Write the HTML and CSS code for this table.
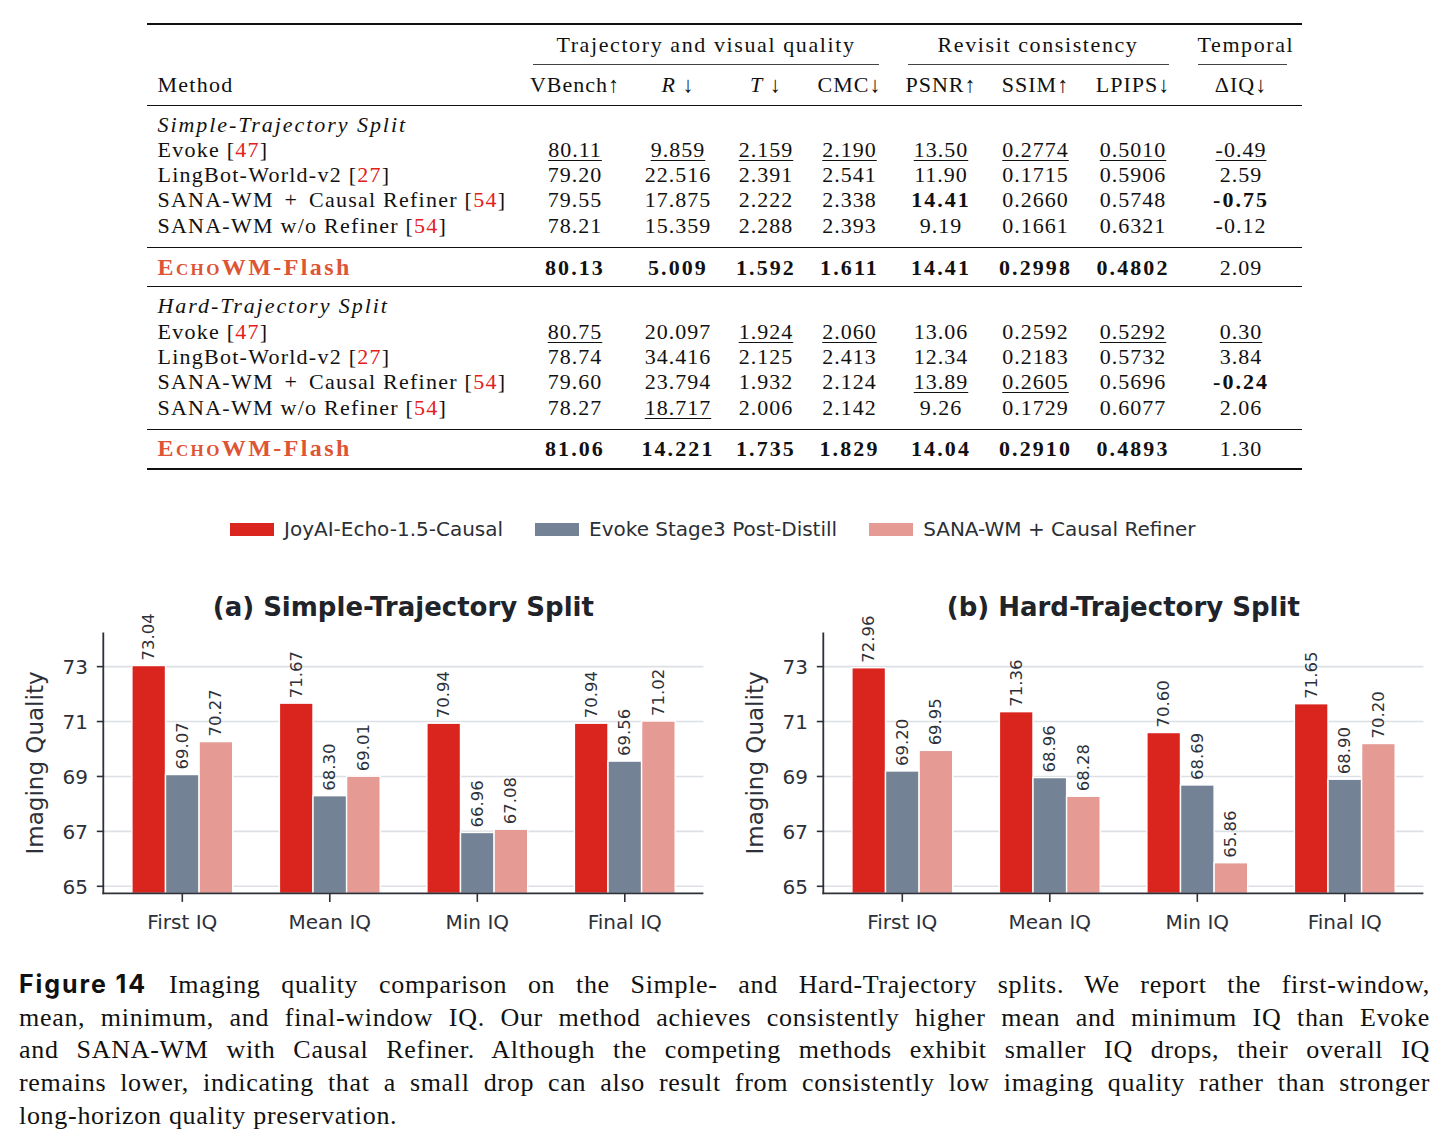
FILE: index.html
```html
<!DOCTYPE html>
<html lang="en">
<head>
    <meta charset="UTF-8">
    <meta name="viewport" content="width=device-width, initial-scale=1.0">
    <title>Figure 14 - Imaging quality</title>
    <link rel="stylesheet" href="styles.css">
</head>
<body>
    <div class="page">
        <table class="results">
            <colgroup>
                <col class="c-method">
                <col class="c-vbench">
                <col class="c-r">
                <col class="c-t">
                <col class="c-cmc">
                <col class="c-psnr">
                <col class="c-ssim">
                <col class="c-lpips">
                <col class="c-diq">
            </colgroup>
            <thead>
                <tr class="group-row">
                    <th></th>
                    <th colspan="4"><div class="cmid traj">Trajectory and visual quality</div></th>
                    <th colspan="3"><div class="cmid revisit">Revisit consistency</div></th>
                    <th><div class="cmid temporal">Temporal</div></th>
                </tr>
                <tr class="head-row">
                    <th class="method">Method</th>
                    <th>VBench↑</th>
                    <th><i>R</i> ↓</th>
                    <th><i>T</i> ↓</th>
                    <th>CMC↓</th>
                    <th>PSNR↑</th>
                    <th>SSIM↑</th>
                    <th>LPIPS↓</th>
                    <th>ΔIQ↓</th>
                </tr>
            </thead>
            <tbody class="split">
                <tr><td class="method split-label" colspan="9"><i>Simple-Trajectory Split</i></td></tr>
                <tr>
                    <td class="method">Evoke [<span class="cite">47</span>]</td>
                    <td><u>80.11</u></td><td><u>9.859</u></td><td><u>2.159</u></td><td><u>2.190</u></td>
                    <td><u>13.50</u></td><td><u>0.2774</u></td><td><u>0.5010</u></td><td><u>-0.49</u></td>
                </tr>
                <tr>
                    <td class="method">LingBot-World-v2 [<span class="cite">27</span>]</td>
                    <td>79.20</td><td>22.516</td><td>2.391</td><td>2.541</td>
                    <td>11.90</td><td>0.1715</td><td>0.5906</td><td>2.59</td>
                </tr>
                <tr>
                    <td class="method">SANA-WM <span class="plus">+</span> Causal Refiner [<span class="cite">54</span>]</td>
                    <td>79.55</td><td>17.875</td><td>2.222</td><td>2.338</td>
                    <td><b>14.41</b></td><td>0.2660</td><td>0.5748</td><td><b>-0.75</b></td>
                </tr>
                <tr>
                    <td class="method">SANA-WM w/o Refiner [<span class="cite">54</span>]</td>
                    <td>78.21</td><td>15.359</td><td>2.288</td><td>2.393</td>
                    <td>9.19</td><td>0.1661</td><td>0.6321</td><td>-0.12</td>
                </tr>
            </tbody>
            <tbody class="ours">
                <tr>
                    <td class="method echo"><span class="sc">Echo</span>WM-Flash</td>
                    <td>80.13</td><td>5.009</td><td>1.592</td><td>1.611</td>
                    <td>14.41</td><td>0.2998</td><td>0.4802</td><td class="plain">2.09</td>
                </tr>
            </tbody>
            <tbody class="split">
                <tr><td class="method split-label" colspan="9"><i>Hard-Trajectory Split</i></td></tr>
                <tr>
                    <td class="method">Evoke [<span class="cite">47</span>]</td>
                    <td><u>80.75</u></td><td>20.097</td><td><u>1.924</u></td><td><u>2.060</u></td>
                    <td>13.06</td><td>0.2592</td><td><u>0.5292</u></td><td><u>0.30</u></td>
                </tr>
                <tr>
                    <td class="method">LingBot-World-v2 [<span class="cite">27</span>]</td>
                    <td>78.74</td><td>34.416</td><td>2.125</td><td>2.413</td>
                    <td>12.34</td><td>0.2183</td><td>0.5732</td><td>3.84</td>
                </tr>
                <tr>
                    <td class="method">SANA-WM <span class="plus">+</span> Causal Refiner [<span class="cite">54</span>]</td>
                    <td>79.60</td><td>23.794</td><td>1.932</td><td>2.124</td>
                    <td><u>13.89</u></td><td><u>0.2605</u></td><td>0.5696</td><td><b>-0.24</b></td>
                </tr>
                <tr>
                    <td class="method">SANA-WM w/o Refiner [<span class="cite">54</span>]</td>
                    <td>78.27</td><td><u>18.717</u></td><td>2.006</td><td>2.142</td>
                    <td>9.26</td><td>0.1729</td><td>0.6077</td><td>2.06</td>
                </tr>
            </tbody>
            <tbody class="ours">
                <tr>
                    <td class="method echo"><span class="sc">Echo</span>WM-Flash</td>
                    <td>81.06</td><td>14.221</td><td>1.735</td><td>1.829</td>
                    <td>14.04</td><td>0.2910</td><td>0.4893</td><td class="plain">1.30</td>
                </tr>
            </tbody>
        </table>

        <div class="legend">
            <div class="legend-item"><span class="swatch ours-color"></span>JoyAI-Echo-1.5-Causal</div>
            <div class="legend-item"><span class="swatch evoke-color"></span>Evoke Stage3 Post-Distill</div>
            <div class="legend-item"><span class="swatch sana-color"></span>SANA-WM + Causal Refiner</div>
        </div>

        <div class="charts">
            <svg class="chart" id="chart-a" width="720" height="380" viewBox="0 0 720 380"></svg>
            <svg class="chart" id="chart-b" width="720" height="380" viewBox="0 0 720 380"></svg>
        </div>

        <div class="caption">
            <span class="line"><b class="fig-label">Figure 14</b>Imaging quality comparison on the Simple- and Hard-Trajectory splits.  We report the first-window,</span>
            <span class="line">mean, minimum, and final-window IQ. Our method achieves consistently higher mean and minimum IQ than Evoke</span>
            <span class="line">and SANA-WM with Causal Refiner.  Although the competing methods exhibit smaller IQ drops, their overall IQ</span>
            <span class="line">remains lower, indicating that a small drop can also result from consistently low imaging quality rather than stronger</span>
            <span class="line last">long-horizon quality preservation.</span>
        </div>
    </div>

    <script>
const COLORS = ['#da251e', '#738294', '#e59a94'];
const GROUPS = ['First IQ', 'Mean IQ', 'Min IQ', 'Final IQ'];
const charts = [
    {
        id: 'chart-a',
        title: '(a) Simple-Trajectory Split',
        values: [[73.04, 69.07, 70.27], [71.67, 68.30, 69.01], [70.94, 66.96, 67.08], [70.94, 69.56, 71.02]]
    },
    {
        id: 'chart-b',
        title: '(b) Hard-Trajectory Split',
        values: [[72.96, 69.20, 69.95], [71.36, 68.96, 68.28], [70.60, 68.69, 65.86], [71.65, 68.90, 70.20]]
    }
];

// axes box, in svg coordinates
const AX_LEFT = 103.3;
const AX_RIGHT = 703.4;
const AX_TOP = 72.5;
const AX_BOTTOM = 333.4;
const Y_AT_65 = 326.3;
const PX_PER_UNIT = 27.46;
const GROUP_X0 = 182.3;
const GROUP_STEP = 147.5;
const BAR_W = 33.6;

function yOf(v) {
    return Y_AT_65 - (v - 65) * PX_PER_UNIT;
}

function add(svg, tag, attrs, text) {
    const node = document.createElementNS('http://www.w3.org/2000/svg', tag);
    for (const key in attrs) node.setAttribute(key, attrs[key]);
    if (text !== undefined) node.textContent = text;
    svg.appendChild(node);
    return node;
}

function drawChart(chart) {
    const svg = document.getElementById(chart.id);

    // horizontal grid lines
    for (let v = 65; v <= 73; v += 2) {
        add(svg, 'line', { x1: AX_LEFT, x2: AX_RIGHT, y1: yOf(v), y2: yOf(v), class: 'grid' });
    }

    // bars and their value labels
    chart.values.forEach((group, i) => {
        const cx = GROUP_X0 + i * GROUP_STEP;
        group.forEach((v, j) => {
            const x = cx - 1.5 * BAR_W + j * BAR_W;
            add(svg, 'rect', {
                x: x, y: yOf(v), width: BAR_W, height: AX_BOTTOM - yOf(v),
                fill: COLORS[j], class: 'bar'
            });
            const lx = x + BAR_W / 2;
            const ly = yOf(v) - 5;
            add(svg, 'text', {
                transform: 'translate(' + lx + ',' + ly + ') rotate(-90)',
                class: 'value'
            }, v.toFixed(2));
        });
    });

    // spines
    add(svg, 'line', { x1: AX_LEFT, x2: AX_LEFT, y1: AX_TOP, y2: AX_BOTTOM + 0.9, class: 'spine' });
    add(svg, 'line', { x1: AX_LEFT - 0.9, x2: AX_RIGHT, y1: AX_BOTTOM, y2: AX_BOTTOM, class: 'spine' });

    // y ticks
    for (let v = 65; v <= 73; v += 2) {
        add(svg, 'line', { x1: AX_LEFT - 6.5, x2: AX_LEFT, y1: yOf(v), y2: yOf(v), class: 'tick' });
        add(svg, 'text', { x: 88, y: yOf(v) + 7.8, class: 'tick-label', 'text-anchor': 'end' }, String(v));
    }

    // x ticks
    GROUPS.forEach((name, i) => {
        const cx = GROUP_X0 + i * GROUP_STEP;
        add(svg, 'line', { x1: cx, x2: cx, y1: AX_BOTTOM, y2: AX_BOTTOM + 8.5, class: 'tick' });
        add(svg, 'text', { x: cx, y: 369, class: 'tick-label', 'text-anchor': 'middle' }, name);
    });

    add(svg, 'text', { x: (AX_LEFT + AX_RIGHT) / 2, y: 56, class: 'chart-title', 'text-anchor': 'middle' }, chart.title);
    add(svg, 'text', {
        transform: 'translate(43,' + (AX_TOP + AX_BOTTOM) / 2 + ') rotate(-90)',
        class: 'axis-label', 'text-anchor': 'middle'
    }, 'Imaging Quality');
}

charts.forEach(drawChart);
    </script>
</body>
</html>
```

FILE: styles.css
```css
body {
    margin: 0;
    background: #fff;
    color: #111;
    font-family: "Liberation Serif", "Times New Roman", serif;
}

.page {
    width: 1449px;
    padding-top: 23px;
}

/* results table */

.results {
    width: 1154px;
    margin: 0 auto;
    border-collapse: collapse;
    table-layout: fixed;
    font-size: 22px;
    line-height: 25.3px;
    letter-spacing: 1px;
    border-top: 2px solid #111;
    border-bottom: 2px solid #111;
}

.c-method { width: 376px; }
.c-vbench { width: 103px; }
.c-r { width: 103px; }
.c-t { width: 73px; }
.c-cmc { width: 94px; }
.c-psnr { width: 89px; }
.c-ssim { width: 100px; }
.c-lpips { width: 95px; }
.c-diq { width: 121px; }

.results th,
.results td {
    padding: 0;
    font-weight: normal;
    text-align: center;
    white-space: nowrap;
}

.results .method {
    text-align: left;
    padding-left: 10px;
    letter-spacing: 1.25px;
}

.results .split-label {
    letter-spacing: 1.95px;
}

.plus {
    margin: 0 4px;
}

.group-row th {
    padding-top: 7px;
    letter-spacing: 1.6px;
}

.cmid {
    padding-bottom: 7px;
    border-bottom: 1px solid #444;
}

.cmid.traj { margin: 0 18px 0 10px; }
.cmid.revisit { margin: 0 12px 0 11px; }
.cmid.temporal { margin: 0 15px 0 17px; }

.head-row th {
    padding: 7px 0;
    border-bottom: 1px solid #111;
}

.results tbody {
    border-bottom: 1px solid #111;
}

.split tr:first-child td {
    padding-top: 6px;
}

.split tr:last-child td {
    padding-bottom: 9px;
}

.ours td {
    padding: 6.5px 0;
    font-weight: bold;
    letter-spacing: 2.1px;
}

.ours td.plain {
    font-weight: normal;
    letter-spacing: 1px;
}

.results b {
    letter-spacing: 2px;
}

.results u {
    text-decoration-thickness: 1px;
    text-underline-offset: 3px;
}

.cite {
    color: #e3201b;
}

.results .echo {
    color: #dd5535;
    font-size: 24px;
    letter-spacing: 2.4px;
}

.sc {
    font-variant: small-caps;
}

/* legend */

.legend {
    display: flex;
    align-items: center;
    gap: 32px;
    margin-top: 47px;
    padding-left: 230px;
    font-family: "DejaVu Sans", sans-serif;
    font-size: 20px;
    line-height: 24px;
    color: #2b2f36;
}

.legend-item {
    display: flex;
    align-items: center;
    gap: 10px;
}

.swatch {
    width: 44px;
    height: 13px;
}

.ours-color { background: #da251e; }
.evoke-color { background: #738294; }
.sana-color { background: #e59a94; }

/* bar charts */

.charts {
    display: flex;
    margin-top: 19px;
}

.chart {
    display: block;
    font-family: "DejaVu Sans", sans-serif;
}

.chart .grid {
    stroke: #dcdfe4;
    stroke-width: 1.6;
}

.chart .bar {
    stroke: #fff;
    stroke-width: 1.4;
}

.chart .spine {
    stroke: #2d3038;
    stroke-width: 1.8;
}

.chart .tick {
    stroke: #2d3038;
    stroke-width: 1.6;
}

.chart .tick-label {
    font-size: 20px;
    fill: #2d3038;
}

.chart .value {
    font-size: 16.5px;
    fill: #2d3038;
    dominant-baseline: central;
}

.chart .chart-title {
    font-size: 26px;
    font-weight: bold;
    fill: #1f232a;
}

.chart .axis-label {
    font-size: 23px;
    fill: #2d3038;
}

/* caption */

.caption {
    margin-top: 28px;
    padding: 0 19px;
    font-size: 26px;
    line-height: 32.6px;
    letter-spacing: 0.7px;
}

.caption .line {
    display: block;
    white-space: nowrap;
    text-align: justify;
    text-align-last: justify;
}

.caption .line.last {
    text-align-last: left;
}

.fig-label {
    display: inline-block;
    font-family: Inter, "Open Sans", sans-serif;
    font-weight: bold;
    font-size: 25px;
    letter-spacing: 1.9px;
    margin-right: 22px;
}
```
